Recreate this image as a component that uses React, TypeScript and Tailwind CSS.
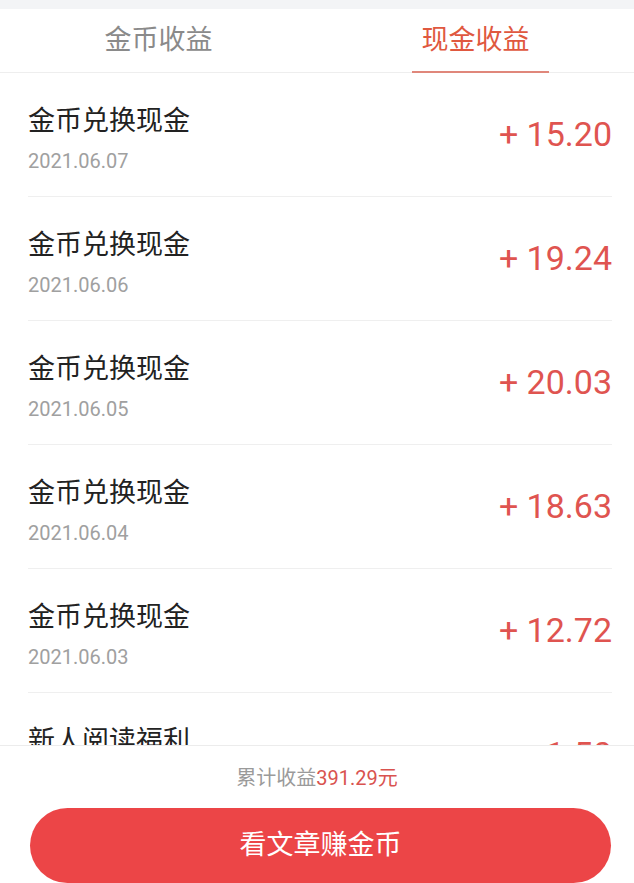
import React from "react";

const rows = [
  { title: "金币兑换现金", date: "2021.06.07", amount: "+ 15.20" },
  { title: "金币兑换现金", date: "2021.06.06", amount: "+ 19.24" },
  { title: "金币兑换现金", date: "2021.06.05", amount: "+ 20.03" },
  { title: "金币兑换现金", date: "2021.06.04", amount: "+ 18.63" },
  { title: "金币兑换现金", date: "2021.06.03", amount: "+ 12.72" },
  { title: "新人阅读福利", date: "2021.06.02", amount: "+ 1.50" },
];

const font = { fontFamily: "Roboto, 'Noto Sans CJK SC', sans-serif" };

export default function App() {
  return (
    <div
      className="relative h-[883px] w-[634px] overflow-hidden bg-white"
      style={font}
    >
      <div className="h-[9px] bg-[#f3f4f6]" />
      <div className="flex h-[64px] border-b border-[#eeeeee]">
        <div className="flex flex-1 items-center justify-center pb-[1px] text-[27px] text-[#8a8a8a]">
          金币收益
        </div>
        <div className="relative flex flex-1 items-center justify-center pb-[1px] text-[27px] text-[#e0583f]">
          现金收益
          <div className="absolute bottom-[-1px] left-[95px] h-[2px] w-[137px] bg-[#e0877b]" />
        </div>
      </div>
      <div className="pl-[28px] pr-[22px]">
        {rows.map((r, i) => (
          <div
            key={i}
            className="flex h-[124px] items-center justify-between border-b border-[#efefef]"
          >
            <div className="flex flex-col self-start pt-[29px]">
              <div className="text-[27px] leading-[38px] text-[#222222]">{r.title}</div>
              <div className="mt-[8px] text-[20px] leading-[26px] text-[#a0a0a0]">{r.date}</div>
            </div>
            <div className="text-[34px] text-[#df5450]">{r.amount}</div>
          </div>
        ))}
      </div>
      <div className="absolute bottom-0 left-0 right-0 flex h-[138px] flex-col border-t border-[#ececec] bg-white">
        <div className="mt-[18px] text-center text-[20px] leading-[28px] text-[#9a9a9a]">
          累计收益<span className="text-[#d9534f]">391.29元</span>
        </div>
        <div className="ml-[30px] mt-[16px] flex h-[75px] w-[581px] items-center justify-center rounded-full bg-[#ec4547] text-[27px] text-white">
          看文章赚金币
        </div>
      </div>
    </div>
  );
}
